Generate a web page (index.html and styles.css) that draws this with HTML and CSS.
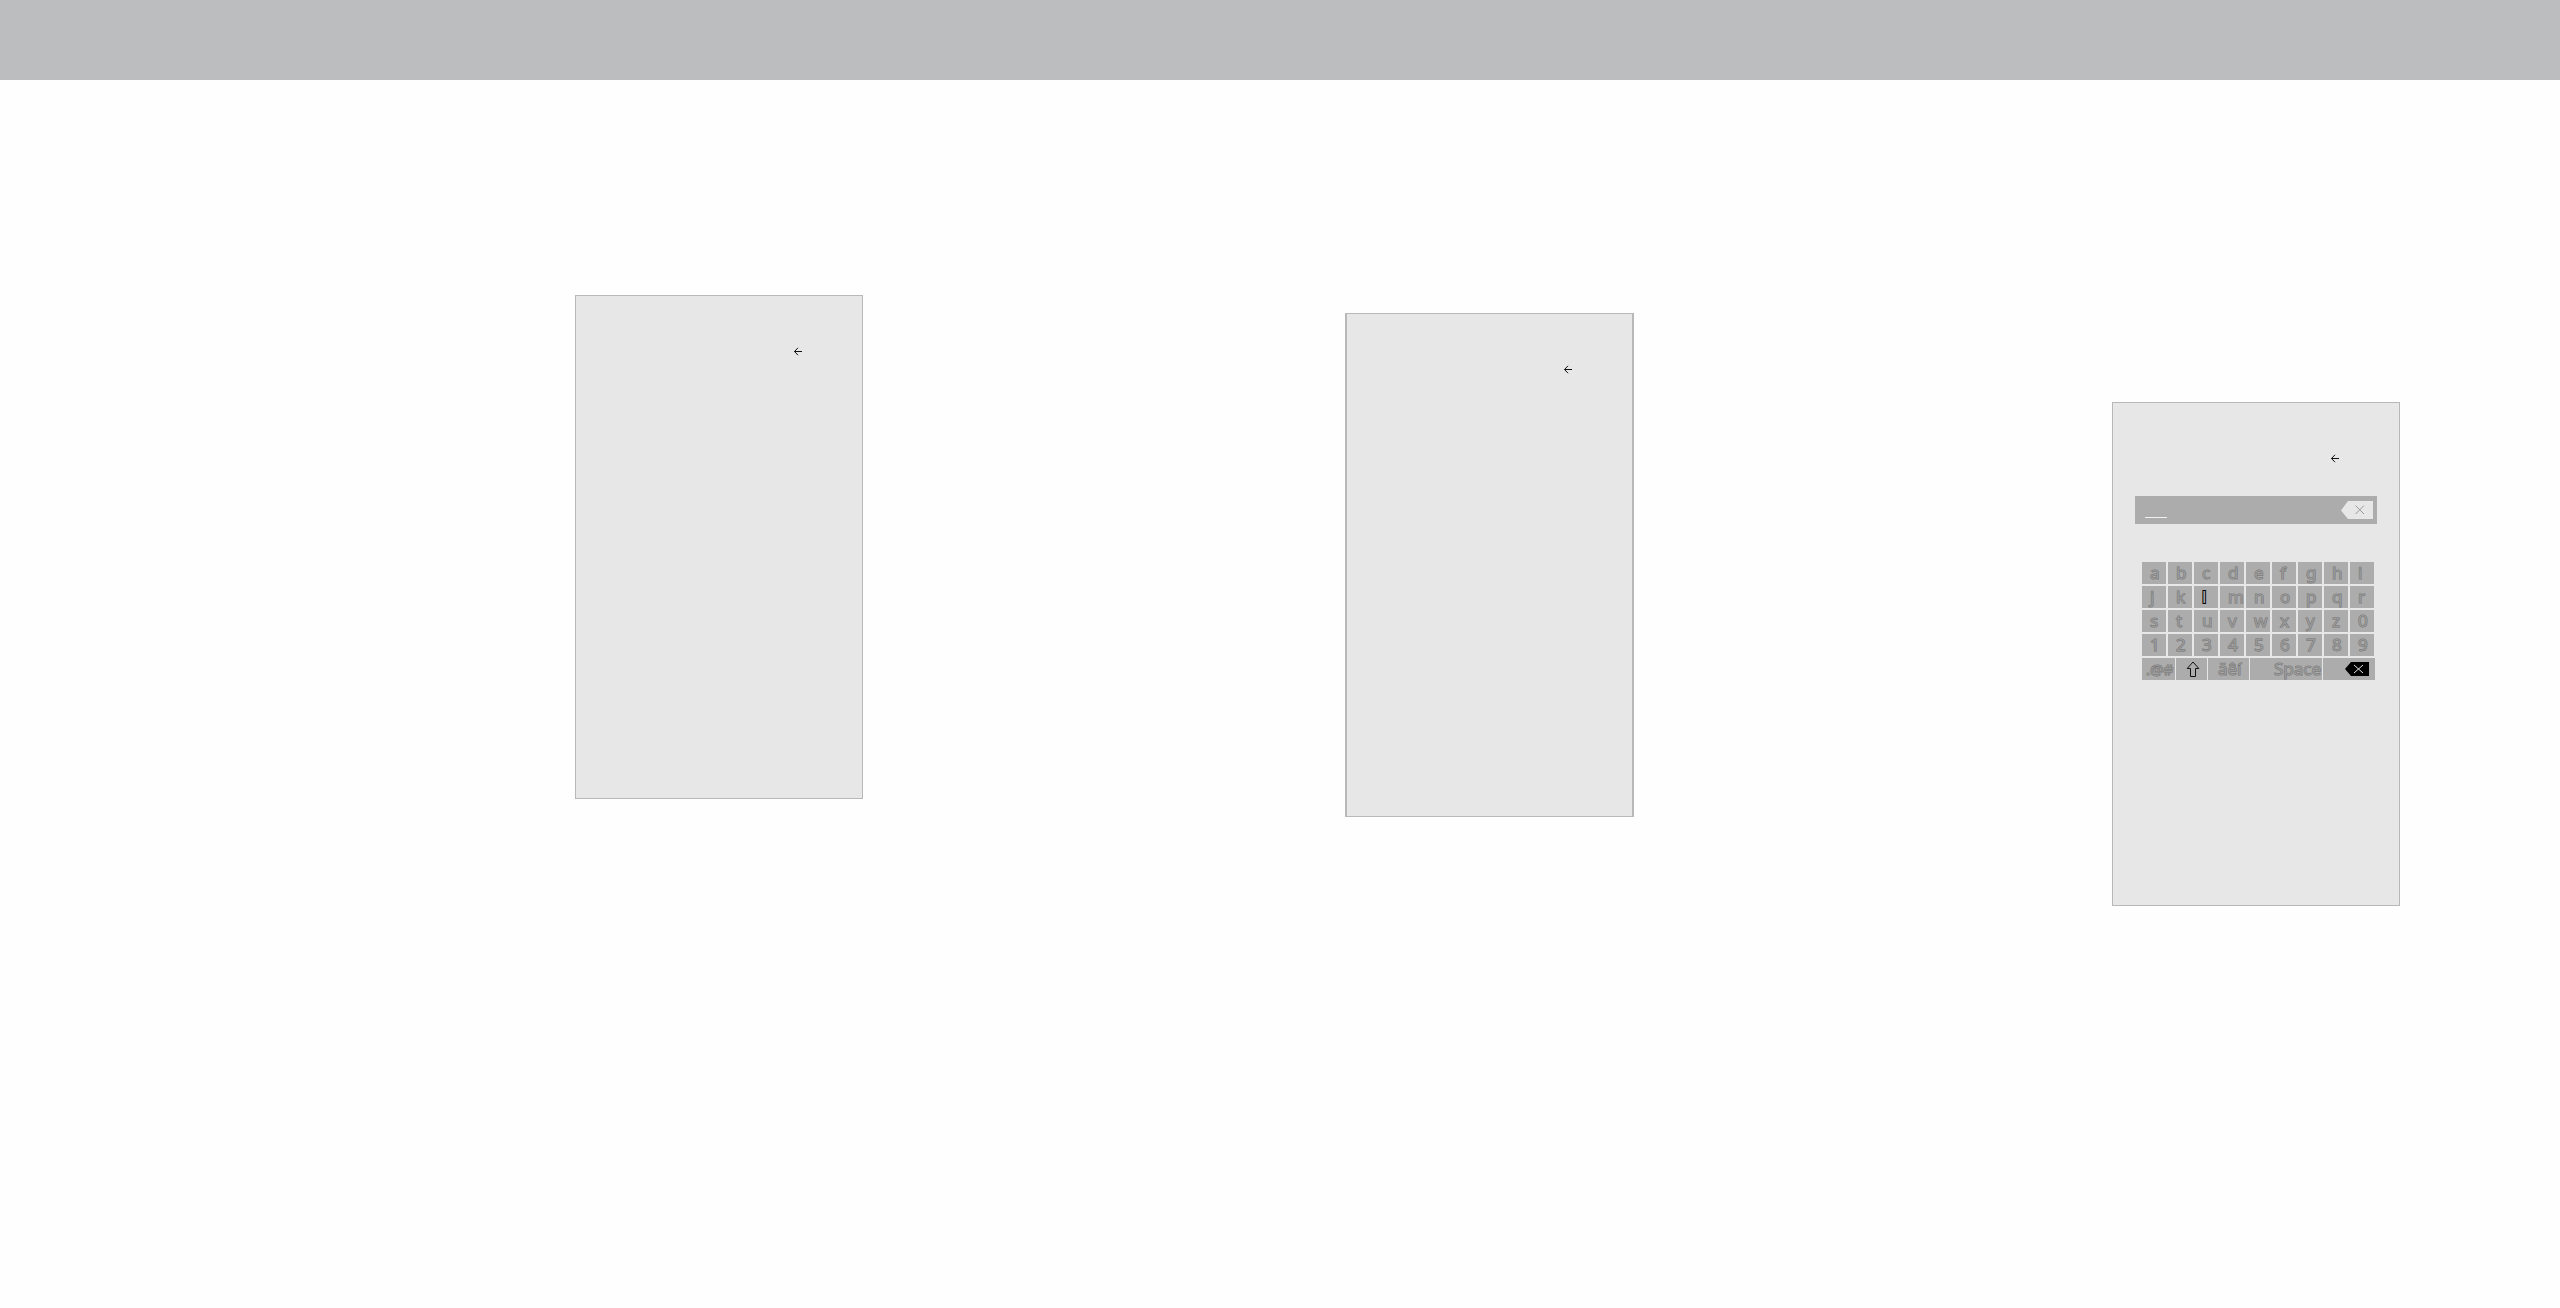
FILE: index.html
```html
<!DOCTYPE html>
<html lang="en">
<head>
    <meta charset="UTF-8">
    <meta name="viewport" content="width=device-width, initial-scale=1.0">
    <title>Menu Screens</title>
    <link rel="stylesheet" href="styles.css">
</head>
<body>
    <header class="top-bar"></header>

    <main class="screens">
        <section class="panel">
            <button type="button" class="back-btn" aria-label="Back">
                <svg viewBox="0 0 9 9"><path d="M9 4.5H1.5M5 .8L1.5 4.5L5 8.2"/></svg>
            </button>
        </section>

        <section class="panel panel-middle">
            <button type="button" class="back-btn" aria-label="Back">
                <svg viewBox="0 0 9 9"><path d="M9 4.5H1.5M5 .8L1.5 4.5L5 8.2"/></svg>
            </button>
        </section>

        <section class="panel panel-keyboard">
            <button type="button" class="back-btn" aria-label="Back">
                <svg viewBox="0 0 9 9"><path d="M9 4.5H1.5M5 .8L1.5 4.5L5 8.2"/></svg>
            </button>

            <div class="entry">
                <input type="text" id="entry" class="entry-input" aria-label="Text entry">
                <button type="button" class="clear-btn" aria-label="Clear">
                    <svg viewBox="0 0 32 18">
                        <path class="shape" d="M0 9.5L7 0H32V18H7Z"/>
                        <path class="cross" d="M14.5 4.5L23 13M23 4.5L14.5 13"/>
                    </svg>
                </button>
            </div>

            <div class="keyboard">
                <div class="keys">
                    <button type="button" class="key">a</button>
                    <button type="button" class="key">b</button>
                    <button type="button" class="key">c</button>
                    <button type="button" class="key">d</button>
                    <button type="button" class="key">e</button>
                    <button type="button" class="key">f</button>
                    <button type="button" class="key">g</button>
                    <button type="button" class="key">h</button>
                    <button type="button" class="key">i</button>
                    <button type="button" class="key">j</button>
                    <button type="button" class="key">k</button>
                    <button type="button" class="key key-active">l</button>
                    <button type="button" class="key">m</button>
                    <button type="button" class="key">n</button>
                    <button type="button" class="key">o</button>
                    <button type="button" class="key">p</button>
                    <button type="button" class="key">q</button>
                    <button type="button" class="key">r</button>
                    <button type="button" class="key">s</button>
                    <button type="button" class="key">t</button>
                    <button type="button" class="key">u</button>
                    <button type="button" class="key">v</button>
                    <button type="button" class="key">w</button>
                    <button type="button" class="key">x</button>
                    <button type="button" class="key">y</button>
                    <button type="button" class="key">z</button>
                    <button type="button" class="key">0</button>
                    <button type="button" class="key">1</button>
                    <button type="button" class="key">2</button>
                    <button type="button" class="key">3</button>
                    <button type="button" class="key">4</button>
                    <button type="button" class="key">5</button>
                    <button type="button" class="key">6</button>
                    <button type="button" class="key">7</button>
                    <button type="button" class="key">8</button>
                    <button type="button" class="key">9</button>
                </div>
                <div class="key-row">
                    <button type="button" class="key key-symbols">.@#</button>
                    <button type="button" class="key key-shift" aria-label="Shift">
                        <svg viewBox="0 0 14 17"><path d="M7 1L12.8 7.5H9.5V15.5H4.5V7.5H1.2Z"/></svg>
                    </button>
                    <button type="button" class="key key-accents">äêí</button>
                    <button type="button" class="key key-space">Space</button>
                    <button type="button" class="key key-delete" aria-label="Delete">
                        <svg viewBox="0 0 24 14">
                            <path class="shape" d="M0 7L6 0H24V14H6Z"/>
                            <path class="cross" d="M9 3L18 11M18 3L9 11"/>
                        </svg>
                    </button>
                </div>
            </div>
        </section>
    </main>
</body>
</html>
```

FILE: styles.css
```css
body {
    margin: 0;
    background-color: #fefefe;
    font-family: "Noto Sans", "Open Sans", sans-serif;
}

.top-bar {
    height: 80px;
    background-color: #bbbdbf;
}

.screens {
    display: grid;
    grid-template-columns: 863fr 771fr 766fr;
    justify-items: end;
    align-items: start;
    padding-right: 6.25%;
}

/* Panels */
.panel {
    display: flex;
    flex-direction: column;
    box-sizing: border-box;
    width: 288px;
    min-height: 504px;
    margin-top: 215px;
    padding-top: 51px;
    border: 1px solid #b7b8b8;
    background-color: #e7e7e7;
}

.panel-middle {
    width: 289px;
    margin-top: 233px;
    border-width: 1px 2px;
}

.panel-keyboard {
    margin-top: 322px;
}

button {
    padding: 0;
    border: none;
    background: none;
    font-family: inherit;
    cursor: pointer;
}

svg {
    display: block;
    fill: none;
}

.back-btn {
    align-self: flex-end;
    margin-right: 60px;
}

.back-btn svg {
    width: 9px;
    height: 9px;
    stroke: #111;
}

/* Text entry */
.entry {
    display: flex;
    justify-content: space-between;
    align-items: center;
    height: 28px;
    margin: 33px 22px 0;
    padding: 0 4px 0 10px;
    background-color: #acacac;
}

.entry-input {
    box-sizing: border-box;
    width: 22px;
    height: 16px;
    padding: 0;
    border: none;
    border-bottom: 1px solid #f0f0f0;
    background: none;
    outline: none;
}

.clear-btn svg {
    width: 32px;
    height: 18px;
}

.clear-btn .shape {
    fill: #e7e7e7;
}

.clear-btn .cross {
    stroke: #999;
}

/* Keyboard */
.keyboard {
    display: flex;
    flex-direction: column;
    gap: 2px;
    margin: 38px 24px 0 29px;
}

.keys {
    display: grid;
    grid-template-columns: repeat(9, 24px);
    gap: 2px;
}

.key {
    height: 22px;
    padding-left: 8px;
    background-color: #acacac;
    color: #999;
    font-size: 17px;
    line-height: 20px;
    text-align: left;
    white-space: nowrap;
    -webkit-text-stroke: 1px #747474;
    paint-order: stroke fill;
}

.key-active {
    color: #acacac;
    -webkit-text-stroke: 2px #000;
}

.key-row {
    display: flex;
    gap: 1px;
}

.key-symbols {
    width: 33px;
    padding-left: 4px;
    font-size: 15px;
}

.key-shift {
    width: 31px;
    padding-left: 10px;
}

.key-shift svg {
    width: 14px;
    height: 17px;
    stroke: #111;
}

.key-accents {
    width: 41px;
    padding-left: 10px;
}

.key-space {
    width: 72px;
    padding-left: 24px;
}

.key-delete {
    width: 52px;
    padding-left: 22px;
}

.key-delete svg {
    width: 24px;
    height: 14px;
}

.key-delete .shape {
    fill: #000;
}

.key-delete .cross {
    stroke: #e7e7e7;
}
```
